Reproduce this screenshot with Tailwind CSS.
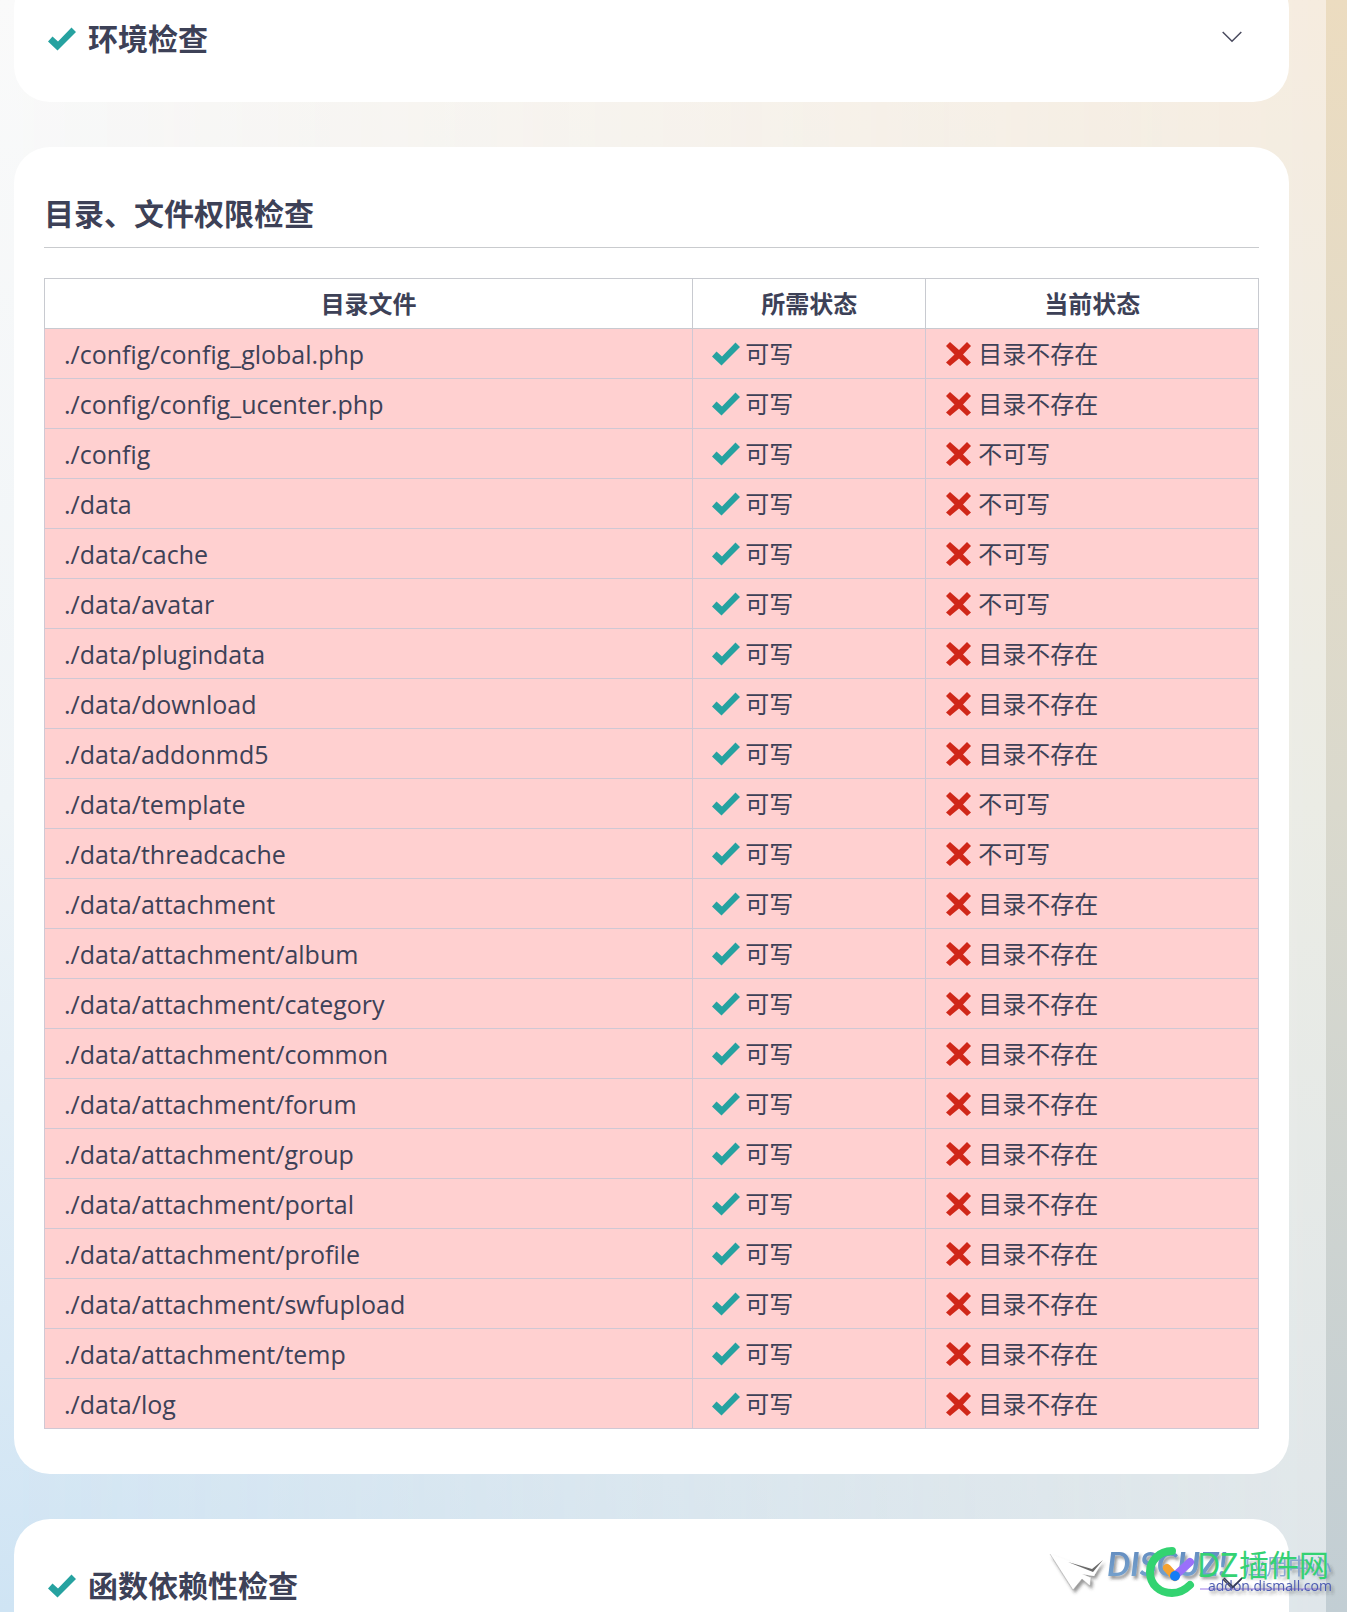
<!DOCTYPE html>
<html lang="zh-CN">
<head>
<meta charset="utf-8">
<meta name="viewport" content="width=device-width, initial-scale=1">
<title>目录、文件权限检查</title>
<script src="https://cdn.jsdelivr.net/npm/@tailwindcss/browser@4"></script>
</head>
<body class="min-h-screen overflow-x-hidden bg-linear-to-b from-[#ecdcc0] via-[#dad9cd] to-[#c2ced4] pr-[21px] font-['Open_Sans','Noto_Sans_CJK_SC',sans-serif] text-[#3d4157]">

<svg class="hidden" aria-hidden="true">
  <symbol id="check" viewBox="0 0 28 24"><path d="M0 14.5 4.5 9.5 10 14.5 23.5 0.5 28 5 9.5 23.5Z" fill="#26a2a0"/></symbol>
  <symbol id="cross" viewBox="0 0 28 24"><path d="M5 0 14 8 22 0 26 4 18 12.500 26 20.500 22 24 14 16.500 5 24 1 20.500 9.500 12.500 1 4Z" fill="#d02718"/></symbol>
  <symbol id="chevron" viewBox="0 0 20 12"><path d="M.7 1 10 10.300 19.300 1" fill="none" stroke="#494a5e" stroke-width="1.500"/></symbol>
</svg>

<main class="relative isolate flex min-h-screen flex-col gap-[45px] overflow-hidden bg-linear-to-b from-[#fafafa] via-[#eff4f7] to-[#cfe4f4] pr-[37px] pl-3.5">
  <div class="absolute inset-0 -z-10 bg-linear-to-b from-[#f6ecdf] via-[#ebece5] to-[#dfe6ea] mask-linear-90 mask-linear-from-transparent mask-linear-to-black"></div>

  <section class="-mt-[27px] rounded-[36px] bg-white px-[30px] pt-[41px] pb-[38px]">
    <button type="button" class="flex h-[50px] w-full items-center gap-3 pr-[17px] pl-1 text-left">
      <svg class="h-6 w-7"><use href="#check"/></svg>
      <span class="grow text-[30px] leading-[50px] font-bold">环境检查</span>
      <svg class="mb-1 h-3 w-5"><use href="#chevron"/></svg>
    </button>
  </section>

  <section class="rounded-[36px] bg-white px-[30px] pt-[42px] pb-[45px]">
    <h2 class="mb-[30px] border-b border-[#c9cbce] pb-2 text-[30px] leading-[50px] font-bold">目录、文件权限检查</h2>
    <table class="w-full table-fixed border-collapse text-2xl">
      <thead>
        <tr class="h-[50px]">
          <th scope="col" class="w-[53.4%] border border-[#c8cad0] p-0 font-bold">目录文件</th>
          <th scope="col" class="w-[19.2%] border border-[#c8cad0] p-0 font-bold">所需状态</th>
          <th scope="col" class="border border-[#c8cad0] p-0 font-bold">当前状态</th>
        </tr>
      </thead>
      <tbody id="rows"></tbody>
    </table>
  </section>

  <section class="grow rounded-t-[36px] bg-white px-[30px] pt-[42px]">
    <button type="button" class="flex h-[50px] w-full items-center gap-3 pr-[17px] pl-1 text-left">
      <svg class="h-6 w-7"><use href="#check"/></svg>
      <span class="grow text-[30px] leading-[50px] font-bold">函数依赖性检查</span>
      <svg class="mb-1 h-3 w-5"><use href="#chevron"/></svg>
    </button>
  </section>
</main>

<template id="row">
  <tr class="h-[50px] bg-[#ffd0d0]">
    <td class="path border border-[#d0c8d4] py-0 pr-2 pl-[19px] text-[25px] leading-8"></td>
    <td class="border border-[#d0c8d4] py-0 pr-2 pl-[19px]"><div class="flex items-center gap-[5px]"><svg class="h-6 w-7"><use href="#check"/></svg><span class="leading-9">可写</span></div></td>
    <td class="border border-[#d0c8d4] py-0 pr-2 pl-[19px]"><div class="flex items-center gap-[5px]"><svg class="h-6 w-7"><use href="#cross"/></svg><span class="state leading-9"></span></div></td>
  </tr>
</template>

<svg class="absolute right-0 bottom-0 h-[72px] w-[307px]" viewBox="0 0 307 72" role="img" aria-label="DZ插件网 addon.dismall.com">
  <defs>
    <filter id="shade" x="-20%" y="-20%" width="150%" height="160%"><feDropShadow dx="2" dy="3" stdDeviation="1.500" flood-color="#333" flood-opacity=".5"/></filter>
    <linearGradient id="blue" x2="0" y2="1"><stop stop-color="#5f88bd"/><stop offset="1" stop-color="#78a5cf"/></linearGradient>
  </defs>
  <g filter="url(#shade)">
    <path d="M10 14 29 21 53 30 63 20 54 36 42 34 51 38 50 46 42 39 33 50Z" fill="#fff"/>
    <path d="M28 22 52 29 63 20 53 32Z" fill="#6b6b6b"/>
    <path d="m10 14 23 36 9-11 8 7 1-8" fill="none" stroke="#777" stroke-opacity=".35"/>
    <text x="67" y="36" font-family="Lato" font-size="33" font-weight="700" font-style="italic" fill="url(#blue)">DISCUZ!</text>
    <text x="204" y="34" font-family="Noto Sans CJK SC" font-size="22" fill="#7797cb" opacity=".8">应用中心</text>
  </g>
  <path d="M160 49H280" stroke="#9b78e8" stroke-width="1"/>
  <path d="M132 11C119 11 110 21 110 32C110 45 120 53 132 53C141 53 146 49 150 45" fill="none" stroke="#33d371" stroke-width="8" stroke-linecap="round"/>
  <path d="m127 28 8 9" stroke="#f6a22e" stroke-width="8" stroke-linecap="round"/>
  <path d="m137 34 13-12" stroke="#9a70fa" stroke-width="8" stroke-linecap="round"/>
  <circle cx="135" cy="36" r="5" fill="#147df5"/>
  <text x="157" y="37" font-family="Noto Sans, Noto Sans CJK SC" font-size="32" fill="#34d273"><tspan>DZ</tspan><tspan x="199" font-size="30" y="36">插件网</tspan></text>
  <text x="168" y="51" font-family="Open Sans" font-size="14" fill="#4c5bb1" filter="url(#shade)">addon.dismall.com</text>
  <path d="m184 38 9 9 9-9" fill="none" stroke="#343a55" stroke-width="1.500"/>
</svg>

<script>
  const missing = '目录不存在', locked = '不可写';
  const items = [
    ['./config/config_global.php', missing], ['./config/config_ucenter.php', missing],
    ['./config', locked], ['./data', locked], ['./data/cache', locked], ['./data/avatar', locked],
    ['./data/plugindata', missing], ['./data/download', missing], ['./data/addonmd5', missing],
    ['./data/template', locked], ['./data/threadcache', locked],
    ['./data/attachment', missing], ['./data/attachment/album', missing],
    ['./data/attachment/category', missing], ['./data/attachment/common', missing],
    ['./data/attachment/forum', missing], ['./data/attachment/group', missing],
    ['./data/attachment/portal', missing], ['./data/attachment/profile', missing],
    ['./data/attachment/swfupload', missing], ['./data/attachment/temp', missing], ['./data/log', missing]
  ];
  const template = document.getElementById('row');
  for (const [path, state] of items) {
    const row = template.content.cloneNode(true);
    row.querySelector('.path').textContent = path;
    row.querySelector('.state').textContent = state;
    document.getElementById('rows').append(row);
  }
</script>
</body>
</html>
